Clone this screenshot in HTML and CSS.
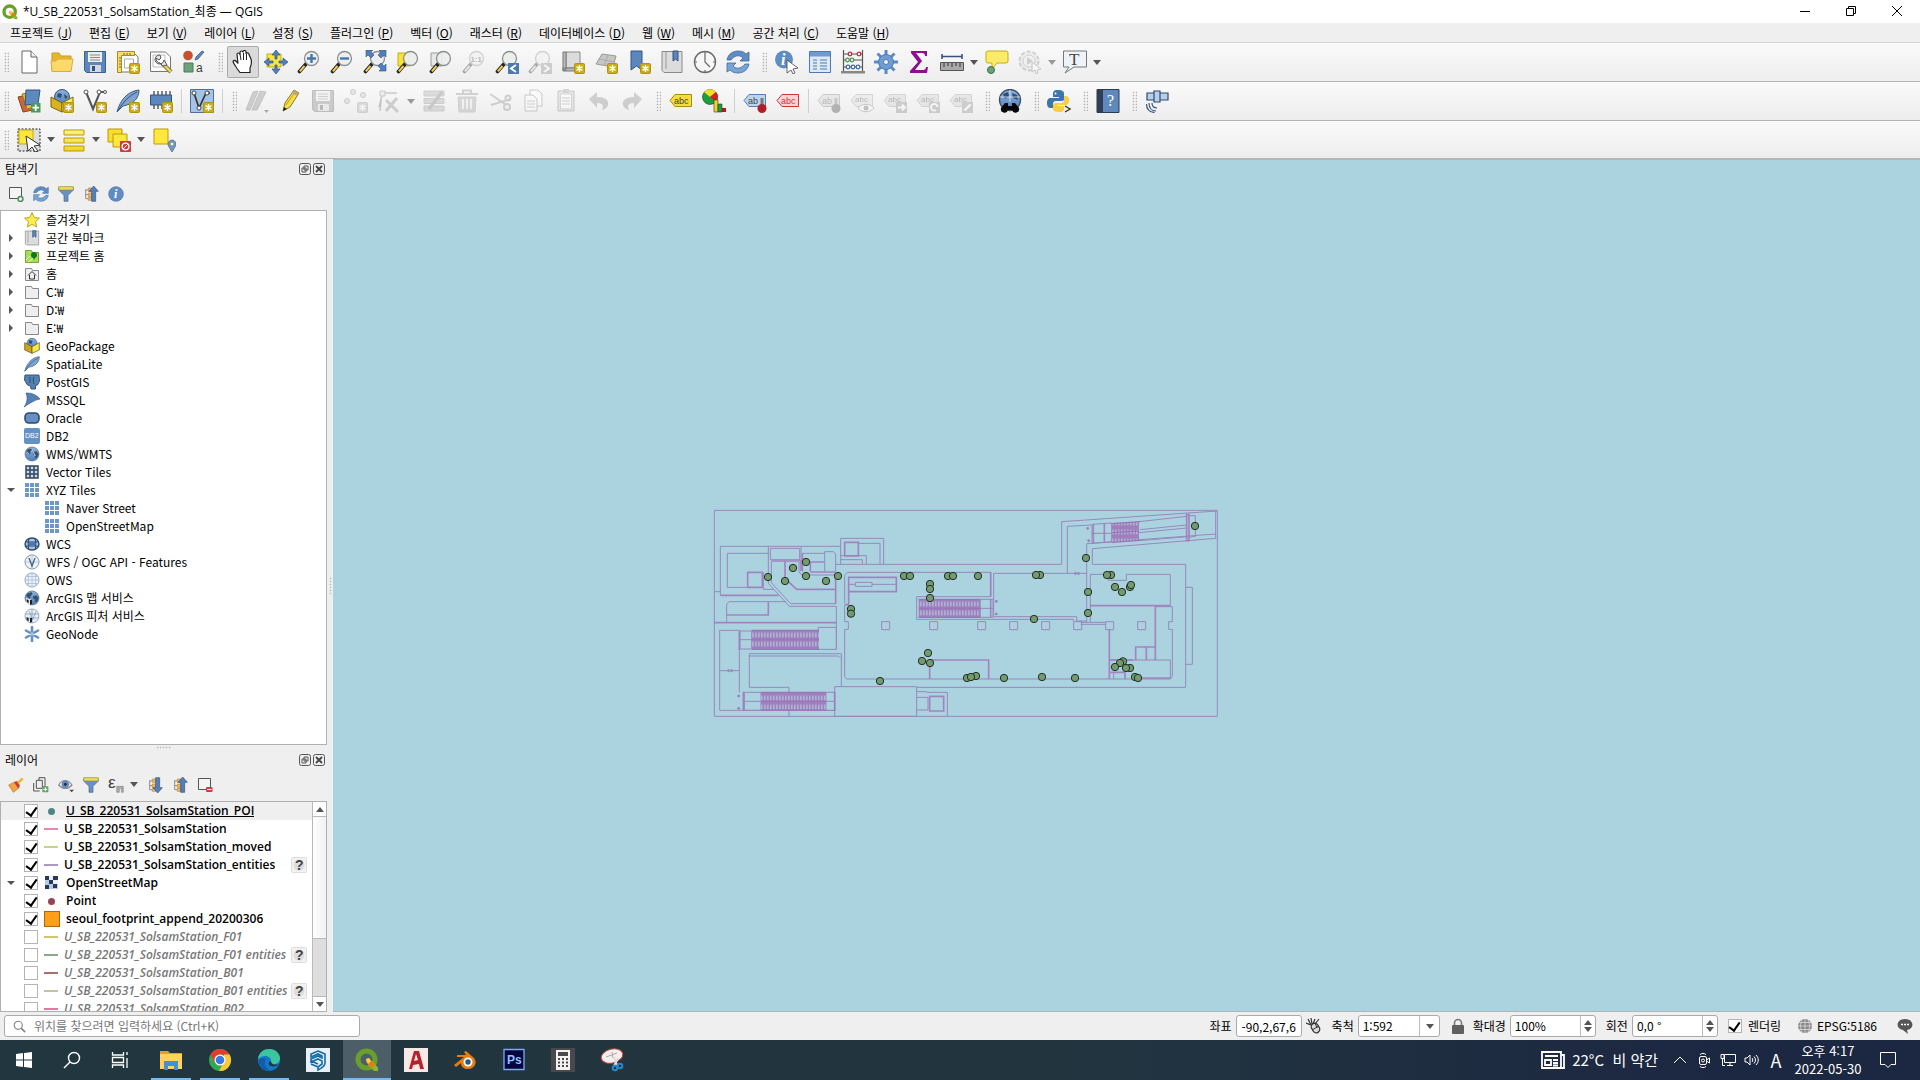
FILE: index.html
```html
<!DOCTYPE html>
<html lang="ko">
<head>
    <meta charset="UTF-8">
    <meta name="viewport" content="width=device-width, initial-scale=1.0">
    <title>*U_SB_220531_SolsamStation_최종 — QGIS</title>
    <link rel="stylesheet" href="styles.css">
</head>
<body>
    <!-- shared paint -->
    <svg class="paint" aria-hidden="true">
        <defs>
            <linearGradient id="blue" x1="0" y1="0" x2="0" y2="1"><stop offset="0" stop-color="#8fb2dc"/><stop offset="1" stop-color="#4f7fb8"/></linearGradient>
            <linearGradient id="yellow" x1="0" y1="0" x2="0" y2="1"><stop offset="0" stop-color="#fff27a"/><stop offset="1" stop-color="#f2d51c"/></linearGradient>
        </defs>
    </svg>
    <!-- icon sprite -->
    <svg class="sprite" aria-hidden="true">
        <defs>
            <g id="badge"><rect x="13.5" y="13.5" width="10" height="10" rx="1" fill="#c9ab1b" stroke="#b3950c"/><path d="M18.500 15v7M15.500 16.700l6 3.600M21.500 16.700l-6 3.600" stroke="#fff" stroke-width="1.400"/></g>
            <g id="mag"><path d="M9 14L2.500 21.500" stroke="#222" stroke-width="3.600" stroke-linecap="round"/><path d="M7.500 16L2.800 21.300" stroke="#f4cf4a" stroke-width="2"/><circle cx="14.500" cy="8.500" r="7" fill="#eceeee" fill-opacity=".9" stroke="#8a8f8f" stroke-width="1.300"/></g>
            <g id="globe"><circle cx="12" cy="12" r="10.500" fill="url(#blue)" stroke="#4b6486"/><path d="M6 5l5-2 2 3-3 3-1 4-4-2-2-3zM14 9l5-1 3 4-2 5-3 2-1-5-3-2z" fill="#35536f"/></g>
            <g id="tag"><path d="M1 11.500L6 5.500h16.500v12H6z"/></g>
            <g id="tree-rows"><path d="M4 5v14M4 6h4M4 13h4M4 19h4" stroke="#777" stroke-width="1.200"/><path d="M8 3h5v5H8zM8 10.500h5v5H8zM8 17h5v4.500H8z" fill="#f3b45a" stroke="#c98527"/></g>
        </defs>
        <symbol id="new" viewBox="0 0 24 24"><path d="M5 1h9l6 6v16H5z" fill="#fff" stroke="#666"/><path d="M14 1v6h6" fill="#eee" stroke="#666"/></symbol>
        <symbol id="open" viewBox="0 0 24 24"><path d="M2 21V3h7l2 3h10v5" fill="#e8b52e" stroke="#c99a2b"/><path d="M1 11h5l2-2h15l-2 12.500H2z" fill="#fbd96a" stroke="#d9ad3d"/></symbol>
        <symbol id="save" viewBox="0 0 24 24"><path d="M1.500 1.500h21v21h-19l-2-2z" fill="#5d86bd" stroke="#3a5f92"/><path d="M5 2h14v10H5z" fill="#eee"/><path d="M7 5h10M7 7.500h10M7 10h10" stroke="#8a8a8a"/><path d="M7 15h11v7H7z" fill="#d5d8de"/><path d="M9 16h3v5H9z" fill="#34547e"/></symbol>
        <symbol id="layout-new" viewBox="0 0 24 24"><path d="M5 3h13l4 4v15H5z" fill="#fff" stroke="#777"/><path d="M1.500 1.500h17v4h-13v17h-4z" fill="#f9dc6a" stroke="#a98a1e"/><path d="M3 8h2M3 11h2M3 14h2M3 17h2M8 3v2M11 3v2M14 3v2" stroke="#7d6614"/><path d="M8.500 9h9v9h-9z" fill="#fff" stroke="#aaa"/><use href="#badge"/></symbol>
        <symbol id="layouts" viewBox="0 0 24 24"><path d="M1.500 2h15l5 5v14.500h-20z" fill="#fff" stroke="#777"/><path d="M4 5h12v12H4z" fill="none" stroke="#bbb"/><path d="M13 13l9 9" stroke="#8b7a2b" stroke-width="4.400"/><path d="M13 13l9 9" stroke="#ead66a" stroke-width="2.400"/><path d="M11 5a4.500 4.500 0 1 0 4 5l3 5-4 1-3-3a4.500 4.500 0 0 1-4-5l3 2 2-2z" fill="#e3e3e3" stroke="#555"/></symbol>
        <symbol id="style" viewBox="0 0 24 24"><circle cx="6" cy="5.500" r="4.800" fill="#c5522e"/><path d="M2 13h9v9H2z" fill="#6aa377" stroke="#4b7d58"/><path d="M20 1l2 1-6 7-3 1 1-3z" fill="#5d86bd" stroke="#34547e" stroke-width=".7"/><text x="14" y="22" class="glyph sans" font-size="12">a</text></symbol>
        <symbol id="pan" viewBox="0 0 24 24"><path d="M9 22.500l-3-4c-1-2-3-4-4-7 1-2 3-1 5 2l-1-9c0-2 2.500-2 3 0V2.500c0-2 3-2 3 0V2c0-2 3-2 3 0v2c0-2 3-1 3 .500L20 9c1 4 0 7-1 9v4.500z" fill="#fff" stroke="#222" stroke-width="1.200"/><path d="M9 4l1 6M12.500 3v7M15.500 4v6" stroke="#222"/></symbol>
        <symbol id="pan-sel" viewBox="0 0 24 24"><path d="M3 4h14v13H3z" fill="#f5e642" stroke="#c6ab12"/><path d="M12 0l4 5h-3v4h-2V5H8zM12 24l4-5h-3v-4h-2v4H8zM0 12l5-4v3h4v2H5v3zM24 12l-5-4v3h-4v2h4v3z" fill="#5080bd" stroke="#34547e" stroke-width=".7"/></symbol>
        <symbol id="zoom-in" viewBox="0 0 24 24"><use href="#mag"/><path d="M14.500 4v9M10 8.500h9" stroke="#4674ae" stroke-width="2.400"/></symbol>
        <symbol id="zoom-out" viewBox="0 0 24 24"><use href="#mag"/><path d="M10 8.500h9" stroke="#4674ae" stroke-width="2.400"/></symbol>
        <symbol id="zoom-full" viewBox="0 0 24 24"><use href="#mag"/><path d="M3 0h7L8 2l3 3-3 3-3-3-2 2zM23 0h-7l2 2-3 3 3 3 3-3 2 2zM23 21h-7l2-2-3-3 3-3 3 3 2-2z" fill="#4f80bd" stroke="#34547e" stroke-width=".6"/></symbol>
        <symbol id="zoom-sel" viewBox="0 0 24 24"><path d="M2 3h11v13H2z" fill="#f9e433" stroke="#c6ab12"/><use href="#mag"/></symbol>
        <symbol id="zoom-layer" viewBox="0 0 24 24"><path d="M2 3h11v13H2z" fill="#e6e6e6" stroke="#999"/><use href="#mag"/></symbol>
        <symbol id="zoom-11" viewBox="0 0 24 24"><use href="#mag"/><text x="8.500" y="12" class="glyph sans bold" font-size="8">1:1</text></symbol>
        <symbol id="zoom-last" viewBox="0 0 24 24"><use href="#mag"/><path d="M13 13h11v11H13z" fill="#4b79b3"/><path d="M21 15l-5 3.500 5 3.500" fill="none" stroke="#fff" stroke-width="2"/></symbol>
        <symbol id="zoom-next" viewBox="0 0 24 24"><use href="#mag"/><path d="M13 13h11v11H13z" fill="#888"/><path d="M16 15l5 3.500-5 3.500" fill="none" stroke="#fff" stroke-width="2"/></symbol>
        <symbol id="view-new" viewBox="0 0 24 24"><path d="M5 2h14v16H5z" fill="#dcdcdc" stroke="#888"/><path d="M2 2h3v18H2zM2 18h17v3H2z" fill="#bbb" stroke="#777"/><use href="#badge"/></symbol>
        <symbol id="view-3d" viewBox="0 0 24 24"><path d="M8 4l14 2-3 11-17-3z" fill="#c6c6c6" stroke="#999"/><path d="M5 9l16 3M14 5l-4 11" stroke="#aaa"/><use href="#badge"/></symbol>
        <symbol id="mark-new" viewBox="0 0 24 24"><path d="M4 1h11v19l-5.500-4L4 20z" fill="#5b87be" stroke="#34547e"/><use href="#badge"/></symbol>
        <symbol id="marks" viewBox="0 0 24 24"><path d="M2 1.500h20v21H4l-2-2z" fill="#dcdcdc" stroke="#8a8a8a"/><path d="M6 2v17" stroke="#999"/><path d="M13 1h5v10l-2.500-2-2.500 2z" fill="#5b87be" stroke="#34547e"/></symbol>
        <symbol id="clock" viewBox="0 0 24 24"><circle cx="12" cy="12" r="10.500" fill="#f7f7f7" stroke="#6b6b6b" stroke-width="1.400"/><path d="M12 4v8l5 5M12 2v2M12 20v2M2 12h2M20 12h2" fill="none" stroke="#666" stroke-width="1.200"/></symbol>
        <symbol id="refresh" viewBox="0 0 24 24"><path d="M1 10C2 4 7 1 12 1c4 0 6 1 8 3l3-2v9h-9l3-3c-4-4-9-2-12 2z" fill="#5f8cc4" stroke="#40699d" stroke-width=".8"/><path d="M23 14c-1 6-6 9-11 9-4 0-6-1-8-3l-3 2v-9h9l-3 3c4 4 9 2 12-2z" fill="#7aa3d4" stroke="#40699d" stroke-width=".8"/></symbol>
        <symbol id="info" viewBox="0 0 24 24"><circle cx="12" cy="12" r="11" fill="#5f8cc4" stroke="#4a74ab"/><text x="9" y="18" class="glyph serif slant white" font-size="18">i</text></symbol>
        <symbol id="identify" viewBox="0 0 24 24"><circle cx="9" cy="9.500" r="9" fill="#5f8cc4"/><text x="6" y="15" class="glyph serif slant white" font-size="16">i</text><path d="M12 10l11 8-5 1 2 4-2 1-2-4-4 3z" fill="#fff" stroke="#444" stroke-width=".8"/></symbol>
        <symbol id="table" viewBox="0 0 24 24"><path d="M1.500 1.500h21v21h-21z" fill="#dceaf8" stroke="#4d79b0"/><path d="M2 2h20v4.500H2z" fill="#6f9bd0"/><path d="M5 10h4M5 13h4M5 16h4M5 19h4M12 10h7M12 13h7M12 16h7M12 19h7" stroke="#4d79b0" stroke-width="1.200"/></symbol>
        <symbol id="abacus" viewBox="0 0 24 24"><path d="M2.500 0v21M21.500 0v21M2 4h20M2 10h20M2 17h20" stroke="#555" stroke-width="1.200"/><path d="M0 21h24v2.500H0z" fill="#888"/><g fill="#fff" stroke-width="1.300"><g stroke="#d1273d"><circle cx="9" cy="4" r="1.800"/><circle cx="18" cy="4" r="1.800"/></g><g stroke="#4e9a56"><circle cx="6.500" cy="10" r="1.800"/><circle cx="11" cy="10" r="1.800"/></g><g stroke="#3d70a8"><circle cx="7" cy="17" r="1.800"/><circle cx="12" cy="17" r="1.800"/><circle cx="17" cy="17" r="1.800"/></g></g></symbol>
        <symbol id="gear" viewBox="0 0 24 24"><path d="M12 0v24M0 12h24M3.500 3.500l17 17M20.500 3.500l-17 17" stroke="#5b8ac6" stroke-width="3"/><circle cx="12" cy="12" r="7.500" fill="#6f9cd3" stroke="#4d7ab3"/><circle cx="12" cy="12" r="2.500" fill="#f4f4f4" stroke="#4d7ab3"/></symbol>
        <symbol id="sigma" viewBox="0 0 24 24"><path d="M4 1h16v5h-2c0-2-1-3-3-3H9l6 8-7 9h8c2 0 3-1 3-3h2l-1 6H3v-2l8-9-7-9z" fill="#8d0f8f"/></symbol>
        <symbol id="measure" viewBox="0 0 24 24"><path d="M2 6.500h20M2 4v5M22 4v5" stroke="#3c4f80" stroke-width="1.600"/><path d="M.500 12.500h23v8H.500z" fill="#aaa" stroke="#555"/><path d="M4 13v4M8 13v3M12 13v4M16 13v3M20 13v4" stroke="#333"/></symbol>
        <symbol id="tips" viewBox="0 0 24 24"><path d="M3 1h18a2 2 0 0 1 2 2v8a2 2 0 0 1-2 2H12l-5 6v-6H3a2 2 0 0 1-2-2V3a2 2 0 0 1 2-2z" fill="#fbeb6a" stroke="#c6ab12"/><circle cx="6" cy="20" r="3.500" fill="#6aa377" stroke="#3c6e49"/></symbol>
        <symbol id="action" viewBox="0 0 24 24"><circle cx="11" cy="11" r="9.500" fill="#ddd" stroke="#888" stroke-width="2" stroke-dasharray="4 2"/><circle cx="11" cy="11" r="6" fill="#eee" stroke="#888"/><path d="M9 7l6 4-6 4z" fill="#888"/><path d="M14 12l9 7-4 1 1 3-2 1-1-4-3 2z" fill="#fff" stroke="#777"/></symbol>
        <symbol id="text-note" viewBox="0 0 24 24"><path d="M.500 1h23v16H11l-9 6 4-6H.500z" fill="#eef3f8" stroke="#777"/><text x="6" y="14.500" class="glyph serif" font-size="17">T</text></symbol>

        <symbol id="sources" viewBox="0 0 24 24"><path d="M1 8l9-2 6 15-10 2z" fill="#c8683a" stroke="#8f3f1b"/><path d="M5 5l10-2 3 15-8 2z" fill="#e6b83c" stroke="#a17a19"/><path d="M9 1h14l-2 14-13 1z" fill="#5d89c1" stroke="#34547e"/><path d="M14 14h9.500v9.500H14z" fill="#4b9a5b"/><path d="M18.700 15.500v6.500M15.500 18.700H22" stroke="#fff" stroke-width="1.800"/></symbol>
        <symbol id="gpkg-new" viewBox="0 0 24 24"><circle cx="12" cy="8" r="7.500" fill="url(#blue)" stroke="#34547e"/><path d="M8 4l4 1-1 4-4-1zM14 5l4 3-3 2z" fill="#2e4f74"/><path d="M1 8l11 6v9L1 18z" fill="#d8b31c" stroke="#7c6409"/><path d="M23 8l-11 6v9l11-5z" fill="#f8ec5d" stroke="#7c6409"/><use href="#badge"/></symbol>
        <symbol id="gpkg" viewBox="0 0 24 24"><circle cx="12" cy="8" r="7.500" fill="url(#blue)" stroke="#34547e"/><path d="M8 3l5 1-2 5-4-1z" fill="#2e4f74"/><path d="M1 7l11 6v10L1 18z" fill="#cba718" stroke="#5f4d08"/><path d="M23 7l-11 6v10l11-5z" fill="#f6e74c" stroke="#5f4d08"/></symbol>
        <symbol id="vector-new" viewBox="0 0 24 24"><path d="M3 3l7 17L17 3h4" fill="none" stroke="#555" stroke-width="2"/><g fill="#fff" stroke="#555"><circle cx="3" cy="3" r="2"/><circle cx="16" cy="3" r="2"/><circle cx="22" cy="3" r="1.500"/></g><use href="#badge"/></symbol>
        <symbol id="feather" viewBox="0 0 24 24"><path d="M1 23C4 11 12 2 23 1c0 8-5 14-16 16z" fill="#7fa3cf" stroke="#3d5f8c"/><path d="M2 22C7 13 13 7 21 3" stroke="#34547e" fill="none"/></symbol>
        <symbol id="feather-new" viewBox="0 0 24 24"><use href="#feather"/><use href="#badge"/></symbol>
        <symbol id="chip" viewBox="0 0 24 24"><path d="M5 2v18M9 2v18M13 2v18M17 2v18M21 2v18" stroke="#555" stroke-width="1.400"/><path d="M1.500 6h21v10h-21z" fill="#5b87be" stroke="#34547e"/><use href="#badge"/></symbol>
        <symbol id="virtual" viewBox="0 0 24 24"><path d="M.500.500h23v23H.500z" fill="#a4c3e6" stroke="#4d6f9b"/><path d="M4 4l5 15 7-15h4" fill="none" stroke="#333" stroke-width="1.700"/><g fill="#fff" stroke="#444"><circle cx="4" cy="4" r="2"/><circle cx="9" cy="19" r="2"/><circle cx="17" cy="4" r="2"/></g><use href="#badge"/></symbol>
        <symbol id="edits" viewBox="0 0 24 24"><path d="M1 21L8 3l5-1-8 19zM7 21l8-19 6 1-9 18z" fill="#888" stroke="#666"/><path d="M19 21h5l-2.500 3z" fill="#222"/></symbol>
        <symbol id="pencil" viewBox="0 0 24 24"><path d="M5 22l2-8L16 1l5 3-9 14z" fill="#f5e04a" stroke="#8b7a14"/><path d="M8 16l9-13" stroke="#b8a11e"/><path d="M5 22l1-4 3 2z" fill="#222"/><path d="M16 1l5 3-2 3-5-3z" fill="#b9a876"/></symbol>
        <symbol id="points" viewBox="0 0 24 24"><g fill="#ccc" stroke="#777"><circle cx="9" cy="3" r="2.500"/><circle cx="19" cy="6" r="2.500"/><circle cx="3" cy="12" r="2.500"/></g><use href="#badge"/></symbol>
        <symbol id="vertex" viewBox="0 0 24 24"><path d="M3 22L5 4h15M5 6l-3 12" fill="none" stroke="#777" stroke-width="1.500"/><path d="M3 2h5v5H3z" fill="#ddd" stroke="#777"/><path d="M9 22L20 9M9 11l12 12" stroke="#888" stroke-width="3"/></symbol>
        <symbol id="modify" viewBox="0 0 24 24"><path d="M2 2h20v5H2zM2 9.500h20v5H2zM2 17h20v5H2z" fill="#aaa" stroke="#888"/><path d="M7 20L20 3" stroke="#777" stroke-width="3"/></symbol>
        <symbol id="trash" viewBox="0 0 24 24"><path d="M3 8h18l-1 15H4z" fill="#b5a0a0" stroke="#988"/><path d="M1 5h22M8 4V1.500h8V4" fill="none" stroke="#988" stroke-width="2"/><path d="M8 10v10M12 10v10M16 10v10" stroke="#eee" stroke-width="2"/></symbol>
        <symbol id="cut" viewBox="0 0 24 24"><path d="M2 5l15 10M3 16l20-6" stroke="#888" stroke-width="2"/><g fill="none" stroke="#888" stroke-width="2"><circle cx="19" cy="18" r="3"/><circle cx="20" cy="9" r="2.500"/></g></symbol>
        <symbol id="copy" viewBox="0 0 24 24"><path d="M9 1h8l4 4v12H9z" fill="#fff" stroke="#777"/><path d="M4 6h8l4 4v12H4z" fill="#fff" stroke="#777"/><path d="M6 12h8M6 15h8M6 18h8" stroke="#888"/></symbol>
        <symbol id="paste" viewBox="0 0 24 24"><path d="M4 2h16v20H4z" fill="#ccc" stroke="#777"/><path d="M6.500 5h11v15h-11z" fill="#fff" stroke="#999"/><path d="M9 0h6v4H9z" fill="#999"/><path d="M8 9h8M8 12h8M8 15h8" stroke="#888"/></symbol>
        <symbol id="undo" viewBox="0 0 24 24"><path d="M2 10l8-7v5c8 0 12 3 11 8-1 3-3 4-6 5 2-4 1-7-5-7v5z" fill="#888"/></symbol>
        <symbol id="redo" viewBox="0 0 24 24"><path d="M22 10l-8-7v5C6 8 2 11 3 16c1 3 3 4 6 5-2-4-1-7 5-7v5z" fill="#888"/></symbol>
        <symbol id="label" viewBox="0 0 24 24"><use href="#tag" fill="#f5dc3f" stroke="#a98c0b"/><text x="5" y="15" class="glyph sans" font-size="9">abc</text></symbol>
        <symbol id="diagram" viewBox="0 0 24 24"><circle cx="8" cy="8" r="7.500" fill="#17a03b" stroke="#333" stroke-width=".6"/><path d="M8 8L2 3a8 8 0 0 1 12 0z" fill="#f4dd22"/><path d="M8 8l6-5a8 8 0 0 1 0 10z" fill="#d0221f"/><path d="M12 11h4v12h-4z" fill="#f1d51e" stroke="#333" stroke-width=".6"/><path d="M16 15h4v8h-4z" fill="#17a03b" stroke="#333" stroke-width=".6"/><path d="M20 19h4v4h-4z" fill="#b5171d"/></symbol>
        <symbol id="label-pin" viewBox="0 0 24 24"><use href="#tag" fill="#bcd4ef" stroke="#5680b2"/><text x="5" y="15" class="glyph sans" font-size="9">ab</text><path d="M19 9v8" stroke="#777" stroke-width="3"/><circle cx="19" cy="19.500" r="4.500" fill="#b01f28"/></symbol>
        <symbol id="label-red" viewBox="0 0 24 24"><use href="#tag" fill="#fbd5d5" stroke="#d9303a"/><text x="5" y="15" class="glyph sans red" font-size="9">abc</text></symbol>
        <symbol id="label-eye" viewBox="0 0 24 24"><use href="#tag" fill="#ddd" stroke="#999"/><text x="5" y="13" class="glyph sans" font-size="8">abc</text><path d="M8 19c4-5 12-5 16 0-4 5-12 5-16 0z" fill="#fff" stroke="#777"/><circle cx="16" cy="19" r="2.500" fill="#666"/></symbol>
        <symbol id="label-move" viewBox="0 0 24 24"><use href="#tag" fill="#ccc" stroke="#999"/><text x="5" y="13" class="glyph sans" font-size="8">abc</text><path d="M13 13h11v11H13z" fill="#888"/><path d="M15 18.500h7M19 15.500l3 3-3 3" fill="none" stroke="#fff" stroke-width="1.800"/></symbol>
        <symbol id="label-rotate" viewBox="0 0 24 24"><use href="#tag" fill="#ccc" stroke="#999"/><text x="5" y="13" class="glyph sans" font-size="8">abc</text><path d="M13 13h11v11H13z" fill="#888"/><path d="M20 21a3.300 3.300 0 1 1 1.500-3" fill="none" stroke="#fff" stroke-width="1.800"/></symbol>
        <symbol id="label-edit" viewBox="0 0 24 24"><use href="#tag" fill="#ccc" stroke="#999"/><text x="5" y="13" class="glyph sans" font-size="8">abc</text><path d="M13 13h11v11H13z" fill="#888"/><path d="M15.500 21.500l6-6" stroke="#fff" stroke-width="2.400"/></symbol>
        <symbol id="search-web" viewBox="0 0 24 24"><circle cx="12" cy="11" r="10.500" fill="url(#blue)" stroke="#3a4f6b" stroke-width="1.300"/><path d="M5 5l5-2 1 4-4 3zM14 4l5 2 1 5-5-2z" fill="#2e4f74"/><path d="M12 1v12M2 8h20" stroke="#dfe9f5" stroke-width=".8"/><path d="M7 14h3v3h4v-3h3l4 5a3 3 0 1 1-7 2h-4a3 3 0 1 1-7-2z" fill="#050505"/></symbol>
        <symbol id="python" viewBox="0 0 24 24"><path d="M11 1c-5 0-5 2-5 5v2h6v1H4c-3 0-4 2-4 5s1 5 4 5h2v-4c0-2 1-3 3-3h6c2 0 2-1 2-3V5c0-3-2-4-6-4z" fill="#3d76a8"/><path d="M12 23c5 0 5-2 5-4v-2h-6v-1h7c3 0 4-2 4-5s-1-4-4-4h-1v4c0 2-1 3-3 3H9c-2 0-3 1-3 3v2c0 3 2 4 6 4z" fill="#f8cf3f"/><circle cx="8.500" cy="4.500" r="1" fill="#fff"/><path d="M18 17l5 3-5 3" fill="none" stroke="#333" stroke-width="1.300"/></symbol>
        <symbol id="help" viewBox="0 0 24 24"><path d="M1 .500h22v23H1z" fill="#5f88bd" stroke="#283c57"/><path d="M1 .500h6v23H1z" fill="#2f3e52"/><text x="11" y="17" class="glyph serif white" font-size="16">?</text></symbol>
        <symbol id="gps" viewBox="0 0 24 24"><path d="M2 4h7v7H2zM15 4h8v7h-8zM9 2h6v11H9z" fill="#b7cfe9" stroke="#2c4a72" stroke-width="1.200"/><path d="M7 14c0 3 2 5 5 5M4 14c0 5 3 8 7 8M1.500 15c0 5 3 8 8 8.500" fill="none" stroke="#34547e" stroke-width="1.200"/></symbol>

        <symbol id="select" viewBox="0 0 24 24"><path d="M1 1h22v22H1z" fill="#ddd" stroke="#222" stroke-dasharray="2 1.500"/><path d="M2 2h14v14H2z" fill="#fde83b" stroke="#c6ab12"/><path d="M9 8l14 9-6 1 4 5-3 1-3-5-4 4z" fill="#fff" stroke="#333"/></symbol>
        <symbol id="select-form" viewBox="0 0 24 24"><path d="M2 2h20v5H2zM2 10h20v5H2zM2 18h20v5H2z" fill="url(#yellow)" stroke="#b99a0a"/></symbol>
        <symbol id="deselect" viewBox="0 0 24 24"><path d="M1 1h14v13H1z" fill="#f8df2e" stroke="#b99a0a"/><path d="M6 6h14v13H6z" fill="#fde83b" stroke="#b99a0a"/><rect x="13" y="13" width="11" height="11" rx="1" fill="#cf3a3c"/><circle cx="18.500" cy="18.500" r="3.400" fill="none" stroke="#fff" stroke-width="1.300"/><path d="M16 21l5-5" stroke="#fff"/></symbol>
        <symbol id="select-loc" viewBox="0 0 24 24"><path d="M2 1h14v15H2z" fill="#fde83b" stroke="#b99a0a"/><path d="M20 24l-3.500-6a4 4 0 1 1 7 0z" fill="#7898b5" stroke="#52718d" stroke-width=".8"/><circle cx="20" cy="16" r="1.300" fill="#fff"/></symbol>

        <symbol id="add-box" viewBox="0 0 16 16"><path d="M1.500 1.500h12v11h-12z" fill="#f4f4f4" stroke="#555"/><circle cx="12.500" cy="13" r="2.500" fill="#e8f3e8" stroke="#4e8a56" stroke-width="1.400"/></symbol>
        <symbol id="del-box" viewBox="0 0 16 16"><path d="M1.500 1.500h12v11h-12z" fill="#f4f4f4" stroke="#555"/><rect x="9" y="10" width="6.500" height="5" rx="1" fill="#d33c47"/><path d="M10 12.500h4.500" stroke="#fff"/></symbol>
        <symbol id="funnel" viewBox="0 0 24 24"><path d="M1 3h22v3l-8 8v9H9v-9L1 6z" fill="#6991c4" stroke="#42679a"/><path d="M1 1h22v5H1z" fill="#e8dc64" stroke="#978b2a"/></symbol>
        <symbol id="collapse" viewBox="0 0 24 24"><use href="#tree-rows"/><path d="M16 0l7 8h-4v15h-6V8H9z" fill="#5280b8" stroke="#34547e"/></symbol>
        <symbol id="expand" viewBox="0 0 24 24"><use href="#tree-rows"/><path d="M16 24l7-8h-4V1h-6v15H9z" fill="#5280b8" stroke="#34547e"/></symbol>
        <symbol id="brush" viewBox="0 0 24 24"><path d="M1 12l10-5 6 9-9 7z" fill="#efa24a" stroke="#c37a2b"/><path d="M9 8l5-2 4 7-3 4z" fill="#c83e2f"/><path d="M15 9l7-7" stroke="#e9bb3b" stroke-width="4"/></symbol>
        <symbol id="group" viewBox="0 0 24 24"><path d="M1 9v12h9M5 5v12h9V5zM9 5V1h9v14h-4" fill="none" stroke="#555" stroke-width="1.500"/><rect x="14" y="14" width="9" height="9" rx="1" fill="#5ea269"/><path d="M18.500 15.500v6M15.500 18.500h6" stroke="#fff" stroke-width="1.500"/></symbol>
        <symbol id="eye" viewBox="0 0 24 24"><path d="M1 12C6 3 15 3 21 12c-6 7-14 7-20 0z" fill="#eee" stroke="#8a8a8a" stroke-width="1.800"/><circle cx="11" cy="11" r="5.500" fill="#5b87be"/><circle cx="11" cy="11" r="2" fill="#223"/><path d="M17 19h7l-3.500 4z" fill="#444"/></symbol>
        <symbol id="epsilon" viewBox="0 0 24 24"><text x="0" y="16" class="glyph sans" font-size="26">ε</text><path d="M13 23v-9h10v9h-3v-6h-3v6z" fill="#aaa" stroke="#777" stroke-width=".7"/></symbol>

        <symbol id="star" viewBox="0 0 16 16"><path d="M8 .500l2.200 5 5.300.600-4 3.600 1.200 5.300L8 12.300 3.300 15l1.200-5.300-4-3.600 5.300-.600z" fill="#fbee4e" stroke="#c2a51d"/></symbol>
        <symbol id="folder" viewBox="0 0 16 16"><path d="M1.500 14.500v-12h6l1 2h6v10z" fill="#eee" stroke="#888"/></symbol>
        <symbol id="folder-home" viewBox="0 0 16 16"><path d="M1.500 14.500v-12h6l1 2h6v10z" fill="#eee" stroke="#888"/><path d="M4 9.500l4-4 4 4M5.500 9v4h5V9" fill="none" stroke="#333"/></symbol>
        <symbol id="folder-project" viewBox="0 0 16 16"><path d="M1.500 14.500v-12h6l1 2h6v10z" fill="#a8dc55" stroke="#77a23a"/><path d="M2 12l4-4M4 14l6-4" stroke="#e9f6c9"/><circle cx="10" cy="7" r="3" fill="#0d7a1f"/><path d="M8 8l2 4 2-4z" fill="#0d7a1f"/></symbol>
        <symbol id="postgis" viewBox="0 0 16 16"><path d="M1 1h14l.500 6-2 4-2 .500V15H7l-.500-3-3-1L.500 6z" fill="#5580b4" stroke="#34547e"/><path d="M6 3v6M10 3c-1 3-1 5 0 7" fill="none" stroke="#2c4b74"/></symbol>
        <symbol id="mssql" viewBox="0 0 16 16"><path d="M2 1c5 0 10 1 14 6l-4 1c-4 2-8 4-12 7 3-4 4-9 2-14z" fill="#5580b4" stroke="#34547e" stroke-width=".6"/></symbol>
        <symbol id="oracle" viewBox="0 0 16 16"><rect x="1" y="3" width="14" height="10" rx="4" fill="#668fc5" stroke="#2f4a6d" stroke-width="1.600"/></symbol>
        <symbol id="db2" viewBox="0 0 16 16"><rect width="16" height="16" rx="2" fill="#6491c6"/><text x="1" y="10" class="glyph sans white" font-size="7">DB2</text></symbol>
        <symbol id="vtiles" viewBox="0 0 16 16"><path d="M2 2h12v12H2zM6 2v12M10 2v12M2 6h12M2 10h12" fill="#c8d9ec" stroke="#32445e" stroke-width="1.500"/></symbol>
        <symbol id="tiles" viewBox="0 0 16 16"><path d="M1 1h4v4H1zM6 1h4v4H6zM11 1h4v4h-4zM1 6h4v4H1zM6 6h4v4H6zM11 6h4v4h-4zM1 11h4v4H1zM6 11h4v4H6zM11 11h4v4h-4z" fill="#6c97ca"/></symbol>
        <symbol id="wms" viewBox="0 0 24 24"><use href="#globe"/><path d="M10 3l3 3-3 3M4 9l4 3M14 9l3 6" fill="none" stroke="#dfe9f5" stroke-width="1.200"/></symbol>
        <symbol id="wcs" viewBox="0 0 16 16"><ellipse cx="8" cy="8" rx="7" ry="6" fill="#a9c3e2" stroke="#2f4a6d" stroke-width="1.400"/><path d="M1 6h14M1 10h14M5 2c-1 4-1 8 0 12M11 2c1 4 1 8 0 12" fill="none" stroke="#2f4a6d"/><path d="M5 6h6v4H5z" fill="#4c79b3"/></symbol>
        <symbol id="wfs" viewBox="0 0 16 16"><circle cx="8" cy="8" r="7" fill="#edf3fa" stroke="#7c93ad"/><path d="M1 8h14M8 1v14" stroke="#b9cadd"/><path d="M5 4l3 8 3-8" fill="none" stroke="#4d6580" stroke-width="1.400"/></symbol>
        <symbol id="ows" viewBox="0 0 16 16"><circle cx="8" cy="8" r="7" fill="#edf3fa" stroke="#8fa7c4"/><path d="M1 8h14M8 1v14M2 4.500h12M2 11.500h12M5 2c-1 4-1 8 0 12M11 2c1 4 1 8 0 12" fill="none" stroke="#a6bdd8" stroke-width=".8"/></symbol>
        <symbol id="arc-map" viewBox="0 0 24 24"><use href="#globe"/><path d="M3 12l7 2-1 9-6-3z" fill="#fff" fill-opacity=".8"/><path d="M4 14l3 1v5l-3-2zM9 15h3v6l-3 1z" fill="#222"/></symbol>
        <symbol id="arc-feat" viewBox="0 0 24 24"><circle cx="12" cy="12" r="10.500" fill="#e6eef7" stroke="#6e87a3"/><path d="M2 9h20M2 15h20M12 2v20M8 5l5 13 5-13" fill="none" stroke="#7890aa"/><path d="M4 14l3 1v5l-3-2zM9 15h3v6l-3 1z" fill="#222"/></symbol>
        <symbol id="geonode" viewBox="0 0 16 16"><path d="M8 1v14M2 4.500l12 7M14 4.500l-12 7" stroke="#668fc5" stroke-width="2.600" stroke-linecap="round"/><circle cx="8" cy="8" r="2" fill="#fff" fill-opacity=".4"/></symbol>
        <symbol id="raster" viewBox="0 0 16 16"><path d="M1 1h13v13H1z" fill="#b9cae2"/><path d="M1 1h4v4H1zM9 1h5v4H9zM5 5h4v4H5zM1 10h4v4H1zM9 9h4v4H9z" fill="#26395a"/><path d="M5 1h4v4H5zM9 5h5v4H9z" fill="#e9eff7"/></symbol>
        <symbol id="unknown" viewBox="0 0 16 16"><rect x=".500" y=".500" width="15" height="15" rx="1" fill="#f1f1f1" stroke="#ddd"/><circle cx="8" cy="8" r="5.500" fill="#ddd"/><text x="4" y="13" class="glyph sans bold" font-size="14">?</text></symbol>
        <symbol id="float" viewBox="0 0 12 12"><rect x=".500" y=".500" width="11" height="11" rx="2" fill="#eee" stroke="#555"/><path d="M5 3h4v4H5zM3 5h4v4H3z" fill="none" stroke="#555"/></symbol>
        <symbol id="close" viewBox="0 0 12 12"><rect x=".500" y=".500" width="11" height="11" rx="2" fill="#eee" stroke="#555"/><path d="M3 3l6 6M9 3l-6 6" stroke="#444" stroke-width="1.800"/></symbol>
        <symbol id="glass" viewBox="0 0 16 16"><circle cx="6.500" cy="6.500" r="5" fill="none" stroke="#888" stroke-width="1.400"/><path d="M10 10l5 5" stroke="#888" stroke-width="2"/></symbol>
        <symbol id="mouse" viewBox="0 0 16 16"><path d="M2 1l3 6M0 5l5 2M5 0l1 6M9 1L7 6M13 1L9 6" stroke="#333" stroke-width="1.200"/><rect x="6" y="5" width="7" height="10" rx="3.500" transform="rotate(-30 9.500 10)" fill="#ddd" stroke="#333" stroke-width="1.300"/><path d="M6 12l7-4M9 5l2 5" stroke="#333"/></symbol>
        <symbol id="lock" viewBox="0 0 16 16"><path d="M4.500 8V5a3.500 3.500 0 0 1 7 0v3" fill="none" stroke="#777" stroke-width="1.600"/><rect x="2" y="7" width="12" height="9" rx="1" fill="#5f5f5f"/></symbol>
        <symbol id="crs" viewBox="0 0 16 16"><circle cx="8" cy="8" r="7" fill="#888"/><path d="M1 8h14M8 1v14M2 4.500h12M2 11.500h12M5 2c-2 4-2 8 0 12M11 2c2 4 2 8 0 12" fill="none" stroke="#ddd" stroke-width=".8"/></symbol>
        <symbol id="message" viewBox="0 0 16 16"><path d="M8 1c9 0 10 10 2 11l1 4-5-4C-2 11-1 1 8 1z" fill="#555"/><path d="M4 6.500h2M7 6.500h2M10 6.500h2" stroke="#fff" stroke-width="1.500"/></symbol>
        <symbol id="qgis" viewBox="0 0 24 24"><circle cx="11.500" cy="11.500" r="8.500" fill="none" stroke="#69a02c" stroke-width="5"/><path d="M14 14l4-1 5 7v3h-4l-6-6z" fill="#86b832"/><path d="M11 11l3-1 6 7-3 3-6-6z" fill="#ee7913"/><path d="M11 11l3-1 2 3-3 3z" fill="#f0d34f"/></symbol>
    </svg>

    <header class="titlebar">
        <svg class="ic16"><use href="#qgis"/></svg>
        <h1>*U_SB_220531_SolsamStation_최종 — QGIS</h1>
        <div class="window-buttons">
            <button aria-label="최소화"><svg viewBox="0 0 12 12"><path d="M1 6.500h10"/></svg></button>
            <button aria-label="이전 크기로"><svg viewBox="0 0 12 12"><path d="M1.500 3.500h7v7h-7zM3.500 3.500v-2h7v7h-2"/></svg></button>
            <button aria-label="닫기"><svg viewBox="0 0 12 12"><path d="M1 1l10 10M11 1L1 11"/></svg></button>
        </div>
    </header>

    <nav class="menubar">
        <button>프로젝트 (<u>J</u>)</button>
        <button>편집 (<u>E</u>)</button>
        <button>보기 (<u>V</u>)</button>
        <button>레이어 (<u>L</u>)</button>
        <button>설정 (<u>S</u>)</button>
        <button>플러그인 (<u>P</u>)</button>
        <button>벡터 (<u>O</u>)</button>
        <button>래스터 (<u>R</u>)</button>
        <button>데이터베이스 (<u>D</u>)</button>
        <button>웹 (<u>W</u>)</button>
        <button>메시 (<u>M</u>)</button>
        <button>공간 처리 (<u>C</u>)</button>
        <button>도움말 (<u>H</u>)</button>
    </nav>

    <!-- toolbars -->
    <div class="toolbar-row">
        <div class="toolbar">
            <button aria-label="새 프로젝트"><svg><use href="#new"/></svg></button>
            <button aria-label="열기"><svg><use href="#open"/></svg></button>
            <button aria-label="저장"><svg><use href="#save"/></svg></button>
            <button aria-label="새 인쇄 조판"><svg><use href="#layout-new"/></svg></button>
            <button aria-label="조판 관리자"><svg><use href="#layouts"/></svg></button>
            <button aria-label="스타일 관리자"><svg><use href="#style"/></svg></button>
        </div>
        <div class="toolbar">
            <button class="active" aria-label="지도 이동"><svg><use href="#pan"/></svg></button>
            <button aria-label="선택 영역으로 이동"><svg><use href="#pan-sel"/></svg></button>
            <button aria-label="확대"><svg><use href="#zoom-in"/></svg></button>
            <button aria-label="축소"><svg><use href="#zoom-out"/></svg></button>
            <button aria-label="전체 보기"><svg><use href="#zoom-full"/></svg></button>
            <button aria-label="선택 영역 보기"><svg><use href="#zoom-sel"/></svg></button>
            <button aria-label="레이어 보기"><svg><use href="#zoom-layer"/></svg></button>
            <button disabled aria-label="원본 해상도"><svg><use href="#zoom-11"/></svg></button>
            <button aria-label="이전 보기"><svg><use href="#zoom-last"/></svg></button>
            <button disabled aria-label="다음 보기"><svg><use href="#zoom-next"/></svg></button>
            <button aria-label="새 지도 뷰"><svg><use href="#view-new"/></svg></button>
            <button aria-label="새 3D 뷰"><svg><use href="#view-3d"/></svg></button>
            <button aria-label="새 북마크"><svg><use href="#mark-new"/></svg></button>
            <button aria-label="북마크"><svg><use href="#marks"/></svg></button>
            <button aria-label="시간 제어기"><svg><use href="#clock"/></svg></button>
            <button aria-label="새로고침"><svg><use href="#refresh"/></svg></button>
        </div>
        <div class="toolbar">
            <button aria-label="객체 식별"><svg><use href="#identify"/></svg></button>
            <button aria-label="속성 테이블"><svg><use href="#table"/></svg></button>
            <button aria-label="필드 계산기"><svg><use href="#abacus"/></svg></button>
            <button aria-label="공간 처리 툴박스"><svg><use href="#gear"/></svg></button>
            <button aria-label="통계"><svg><use href="#sigma"/></svg></button>
            <button class="drop" aria-label="측정"><svg><use href="#measure"/></svg></button>
            <button aria-label="맵 도움말"><svg><use href="#tips"/></svg></button>
            <button class="drop" disabled aria-label="액션"><svg><use href="#action"/></svg></button>
            <button class="drop" aria-label="텍스트 주석"><svg><use href="#text-note"/></svg></button>
        </div>
    </div>

    <div class="toolbar-row">
        <div class="toolbar">
            <button aria-label="데이터 원본 관리자"><svg><use href="#sources"/></svg></button>
            <button aria-label="새 GeoPackage"><svg><use href="#gpkg-new"/></svg></button>
            <button aria-label="새 Shapefile"><svg><use href="#vector-new"/></svg></button>
            <button aria-label="새 SpatiaLite"><svg><use href="#feather-new"/></svg></button>
            <button aria-label="새 임시 레이어"><svg><use href="#chip"/></svg></button>
            <span class="sep"></span>
            <button aria-label="새 가상 레이어"><svg><use href="#virtual"/></svg></button>
            <span class="sep"></span>
        </div>
        <div class="toolbar">
            <button disabled aria-label="현재 편집"><svg><use href="#edits"/></svg></button>
            <button aria-label="편집 전환"><svg><use href="#pencil"/></svg></button>
            <button disabled aria-label="편집 저장"><svg><use href="#save"/></svg></button>
            <button disabled aria-label="포인트 추가"><svg><use href="#points"/></svg></button>
            <button class="drop" disabled aria-label="꼭짓점 도구"><svg><use href="#vertex"/></svg></button>
            <button disabled aria-label="속성 수정"><svg><use href="#modify"/></svg></button>
            <button disabled aria-label="삭제"><svg><use href="#trash"/></svg></button>
            <button disabled aria-label="잘라내기"><svg><use href="#cut"/></svg></button>
            <button disabled aria-label="복사"><svg><use href="#copy"/></svg></button>
            <button disabled aria-label="붙여넣기"><svg><use href="#paste"/></svg></button>
            <button disabled aria-label="실행 취소"><svg><use href="#undo"/></svg></button>
            <button disabled aria-label="다시 실행"><svg><use href="#redo"/></svg></button>
        </div>
        <div class="toolbar">
            <button aria-label="라벨"><svg><use href="#label"/></svg></button>
            <button aria-label="다이어그램"><svg><use href="#diagram"/></svg></button>
            <span class="sep"></span>
            <button aria-label="고정 라벨 강조"><svg><use href="#label-pin"/></svg></button>
            <button aria-label="미배치 라벨"><svg><use href="#label-red"/></svg></button>
            <span class="sep"></span>
            <button disabled aria-label="라벨 고정"><svg><use href="#label-pin"/></svg></button>
            <button disabled aria-label="라벨 표시"><svg><use href="#label-eye"/></svg></button>
            <button disabled aria-label="라벨 이동"><svg><use href="#label-move"/></svg></button>
            <button disabled aria-label="라벨 회전"><svg><use href="#label-rotate"/></svg></button>
            <button disabled aria-label="라벨 변경"><svg><use href="#label-edit"/></svg></button>
        </div>
        <div class="toolbar"><button aria-label="메타 검색"><svg><use href="#search-web"/></svg></button></div>
        <div class="toolbar"><button aria-label="파이썬 콘솔"><svg><use href="#python"/></svg></button></div>
        <div class="toolbar"><button aria-label="도움말 목차"><svg><use href="#help"/></svg></button></div>
        <div class="toolbar"><button aria-label="GPS"><svg><use href="#gps"/></svg></button></div>
    </div>

    <div class="toolbar-row last">
        <div class="toolbar">
            <button class="drop" aria-label="객체 선택"><svg><use href="#select"/></svg></button>
            <button class="drop" aria-label="값으로 선택"><svg><use href="#select-form"/></svg></button>
            <button class="drop" aria-label="선택 해제"><svg><use href="#deselect"/></svg></button>
            <button aria-label="위치로 선택"><svg><use href="#select-loc"/></svg></button>
        </div>
    </div>

    <main class="workspace">
        <aside class="docks">
            <!-- browser -->
            <section class="dock browser">
                <div class="dock-title">
                    <h2>탐색기</h2>
                    <button aria-label="분리"><svg><use href="#float"/></svg></button>
                    <button aria-label="닫기"><svg><use href="#close"/></svg></button>
                </div>
                <div class="dock-tools">
                    <button aria-label="레이어 추가"><svg><use href="#add-box"/></svg></button>
                    <button aria-label="새로고침"><svg><use href="#refresh"/></svg></button>
                    <button aria-label="필터"><svg><use href="#funnel"/></svg></button>
                    <button aria-label="모두 접기"><svg><use href="#collapse"/></svg></button>
                    <button aria-label="속성"><svg><use href="#info"/></svg></button>
                </div>
                <ul class="tree">
                    <li><svg class="ic16"><use href="#star"/></svg>즐겨찾기</li>
                    <li class="closed"><svg class="ic16"><use href="#marks"/></svg>공간 북마크</li>
                    <li class="closed"><svg class="ic16"><use href="#folder-project"/></svg>프로젝트 홈</li>
                    <li class="closed"><svg class="ic16"><use href="#folder-home"/></svg>홈</li>
                    <li class="closed"><svg class="ic16"><use href="#folder"/></svg>C:₩</li>
                    <li class="closed"><svg class="ic16"><use href="#folder"/></svg>D:₩</li>
                    <li class="closed"><svg class="ic16"><use href="#folder"/></svg>E:₩</li>
                    <li><svg class="ic16"><use href="#gpkg"/></svg>GeoPackage</li>
                    <li><svg class="ic16"><use href="#feather"/></svg>SpatiaLite</li>
                    <li><svg class="ic16"><use href="#postgis"/></svg>PostGIS</li>
                    <li><svg class="ic16"><use href="#mssql"/></svg>MSSQL</li>
                    <li><svg class="ic16"><use href="#oracle"/></svg>Oracle</li>
                    <li><svg class="ic16"><use href="#db2"/></svg>DB2</li>
                    <li><svg class="ic16"><use href="#wms"/></svg>WMS/WMTS</li>
                    <li><svg class="ic16"><use href="#vtiles"/></svg>Vector Tiles</li>
                    <li class="opened"><svg class="ic16"><use href="#tiles"/></svg>XYZ Tiles</li>
                    <li class="child"><svg class="ic16"><use href="#tiles"/></svg>Naver Street</li>
                    <li class="child"><svg class="ic16"><use href="#tiles"/></svg>OpenStreetMap</li>
                    <li><svg class="ic16"><use href="#wcs"/></svg>WCS</li>
                    <li><svg class="ic16"><use href="#wfs"/></svg>WFS / OGC API - Features</li>
                    <li><svg class="ic16"><use href="#ows"/></svg>OWS</li>
                    <li><svg class="ic16"><use href="#arc-map"/></svg>ArcGIS 맵 서비스</li>
                    <li><svg class="ic16"><use href="#arc-feat"/></svg>ArcGIS 피처 서비스</li>
                    <li><svg class="ic16"><use href="#geonode"/></svg>GeoNode</li>
                </ul>
            </section>
            <div class="handle"></div>
            <!-- layers -->
            <section class="dock layers">
                <div class="dock-title">
                    <h2>레이어</h2>
                    <button aria-label="분리"><svg><use href="#float"/></svg></button>
                    <button aria-label="닫기"><svg><use href="#close"/></svg></button>
                </div>
                <div class="dock-tools">
                    <button aria-label="스타일"><svg><use href="#brush"/></svg></button>
                    <button aria-label="그룹 추가"><svg><use href="#group"/></svg></button>
                    <button aria-label="지도 테마"><svg><use href="#eye"/></svg></button>
                    <button aria-label="범례 필터"><svg><use href="#funnel"/></svg></button>
                    <button class="drop" aria-label="표현식 필터"><svg><use href="#epsilon"/></svg></button>
                    <button aria-label="모두 펼치기"><svg><use href="#expand"/></svg></button>
                    <button aria-label="모두 접기"><svg><use href="#collapse"/></svg></button>
                    <button aria-label="레이어 제거"><svg><use href="#del-box"/></svg></button>
                </div>
                <div class="layer-box">
                    <ul class="layer-list">
                        <li class="current"><label><input type="checkbox" checked><i class="dot teal"></i><span>U_SB_220531_SolsamStation_POI</span></label></li>
                        <li><label><input type="checkbox" checked><i class="line pink"></i><span>U_SB_220531_SolsamStation</span></label></li>
                        <li><label><input type="checkbox" checked><i class="line lime"></i><span>U_SB_220531_SolsamStation_moved</span></label></li>
                        <li><label><input type="checkbox" checked><i class="line violet"></i><span>U_SB_220531_SolsamStation_entities</span></label><svg class="ic16"><use href="#unknown"/></svg></li>
                        <li class="opened"><label><input type="checkbox" checked><svg class="ic16"><use href="#raster"/></svg><span>OpenStreetMap</span></label></li>
                        <li><label><input type="checkbox" checked><i class="dot maroon"></i><span>Point</span></label></li>
                        <li><label><input type="checkbox" checked><i class="fill"></i><span>seoul_footprint_append_20200306</span></label></li>
                        <li class="hidden"><label><input type="checkbox"><i class="line ochre"></i><span>U_SB_220531_SolsamStation_F01</span></label></li>
                        <li class="hidden"><label><input type="checkbox"><i class="line green"></i><span>U_SB_220531_SolsamStation_F01 entities</span></label><svg class="ic16"><use href="#unknown"/></svg></li>
                        <li class="hidden"><label><input type="checkbox"><i class="line brown"></i><span>U_SB_220531_SolsamStation_B01</span></label></li>
                        <li class="hidden"><label><input type="checkbox"><i class="line khaki"></i><span>U_SB_220531_SolsamStation_B01 entities</span></label><svg class="ic16"><use href="#unknown"/></svg></li>
                        <li class="hidden"><label><input type="checkbox"><i class="line rose"></i><span>U_SB_220531_SolsamStation_B02</span></label></li>
                    </ul>
                    <div class="scrollbar">
                        <button class="up" aria-label="위로"></button>
                        <div class="track"><div class="thumb"></div></div>
                        <button class="down" aria-label="아래로"></button>
                    </div>
                </div>
            </section>
        </aside>
        <div class="splitter"></div>

        <!-- station floor plan, 3 units to a pixel -->
        <div class="canvas">
            <svg class="plan" viewBox="30 18 1536 648">
                <defs>
                    <pattern id="treads" y="13" width="9" height="27" patternUnits="userSpaceOnUse"><rect width="9" height="27" fill="#9f80bd"/><rect x="3" y="7" width="5" height="14" fill="#abb4d5"/></pattern>
                </defs>
                <g class="wall">
                    <path d="M43 31H1552V649H43z"/>
                    <path d="M43 275H61M422 139H61V286M205 160H82V262H143M190 217V268H222M205 139V250L268 319H409M214 186V248L272 311H409M211 145H299V179H211zM303 139V186M297 186V216L305 225H407M307 160H374M374 214V155H400L407 162V214M422 193V115H551V193M475 130H540V193M422 167H499V193M422 179H487V193"/>
                    <path d="M407 193H1085V65L1552 33M434 310V226L442 217H872V290M446 253H466M516 253H589M466 247H516V259H466zM80 366V312L88 305H258M409 319V448M355 382H409V448H355z"/>
                    <path d="M120 391H59V631H404M118 450V577M59 512H118M84 508l12 8v-8l-12 8zM120 393H155V447H120zM148 562V461H424V558M148 468H415L422 475M148 562H267V577M267 631V649M133 577H183V631H133zM133 604H183M120 419H155M378 577H404V631H378zM378 604H404"/>
                    <path d="M404 560H650V649H404zM434 316V365H445V388H434V530L440 537H1411L1417 530V388H1406V365H1417V320H1366M650 562H1457V193H1177V146L1547 115V33M650 575H680V577H742V648M650 592H684V630H650M650 358V290H872M650 358H1120V364M841 298H879V352H841zM841 325H879M881 350V220H1160M881 350H1130V363H1160"/>
                    <path d="M1102 220V79L1175 75M1160 367V131L1547 102M1171 223V367M1171 223H1225V241H1279V223H1411V317M1125 216l12 9v-9l-12 9zM1142 367H1217M1142 373H1217M1457 262H1477V493H1457M1320 89L1460 75M1317 98L1460 84M1317 122L1465 110M1317 65L1460 49M1467 47H1486V109L1467 112M1176 73L1235 69V126L1176 130zM1176 100H1235M1241 517V537M1231 480H1411V537"/>
                    <path d="M545 365h24v24h-24zM689 365h24v24h-24zM833 365h24v24h-24zM929 365h24v24h-24zM1025 365h24v24h-24zM1121 365h24v24h-24zM1217 365h24v24h-24zM1313 365h24v24h-24z"/>
                </g>
                <g class="wall thick">
                    <path d="M61 286H235M143 217H187V262H143zM214 183H303V214M255 184V235L290 268H409M407 225V310M307 160V214M307 186H374M331 186V214M331 216H407M434 127H475V168H434zM448 275H589V232H446V314H434M80 345H205V306M43 368H409"/>
                    <path d="M689 589H731V633H689zM689 537V480H866V537M872 217V290M1171 317H1411M1228 388V537M1366 317V480M1307 480V441H1364M1339 441V480M1231 480H1300M1231 517H1275V537M1320 534H1411M1460 44H1467V122H1460zM1180 73V130M1213 71V128M118 393V450M130 575V633M404 575V633M872 298V352"/>
                </g>
                <path fill="url(#treads)" d="M155 391H357V448H155zM183 577H378V631H183z"/>
                <path fill="url(#treads)" transform="translate(0 15)" d="M656 283H841V337H656zM1235 54L1317 50V107L1235 111z"/>
                <path class="rail" d="M155 419H357M183 604H378M656 325H841M1235 98L1317 93M155 391H357M155 448H357M183 577H378M183 631H378M656 298H841M656 352H841M1235 71L1320 65M1235 127L1320 121"/>
                <g class="knob"><circle cx="116" cy="588" r="4"/><circle cx="116" cy="625" r="4"/><circle cx="889" cy="304" r="4"/><circle cx="889" cy="342" r="4"/><circle cx="1163" cy="85" r="4"/><circle cx="1166" cy="122" r="4"/></g>
                <g class="poi">
                    <circle cx="204" cy="231" r="11"/><circle cx="255" cy="243" r="11"/><circle cx="279" cy="204" r="11"/><circle cx="318" cy="186" r="11"/><circle cx="318" cy="228" r="11"/><circle cx="378" cy="243" r="11"/><circle cx="414" cy="228" r="11"/>
                    <circle cx="453" cy="327" r="11"/><circle cx="453" cy="341" r="11"/><circle cx="540" cy="543" r="11"/><circle cx="612" cy="228" r="11"/><circle cx="630" cy="228" r="11"/><circle cx="744" cy="228" r="11"/><circle cx="759" cy="228" r="11"/>
                    <circle cx="690" cy="252" r="11"/><circle cx="690" cy="267" r="11"/><circle cx="690" cy="294" r="11"/><circle cx="684" cy="459" r="11"/><circle cx="666" cy="483" r="11"/><circle cx="690" cy="489" r="11"/>
                    <circle cx="834" cy="228" r="11"/><circle cx="1020" cy="225" r="11"/><circle cx="1008" cy="225" r="11"/><circle cx="1158" cy="174" r="11"/><circle cx="1164" cy="276" r="11"/><circle cx="1164" cy="339" r="11"/><circle cx="1002" cy="357" r="11"/><circle cx="1485" cy="78" r="11"/>
                    <circle cx="1233" cy="225" r="11"/><circle cx="1221" cy="225" r="11"/><circle cx="1245" cy="261" r="11"/><circle cx="1266" cy="276" r="11"/><circle cx="1290" cy="261" r="11"/><circle cx="1293" cy="255" r="11"/>
                    <circle cx="801" cy="534" r="11"/><circle cx="828" cy="528" r="11"/><circle cx="813" cy="531" r="11"/><circle cx="912" cy="534" r="11"/><circle cx="1026" cy="531" r="11"/><circle cx="1125" cy="534" r="11"/>
                    <circle cx="1269" cy="484" r="11"/><circle cx="1260" cy="489" r="11"/><circle cx="1245" cy="501" r="11"/><circle cx="1290" cy="504" r="11"/><circle cx="1278" cy="504" r="11"/><circle cx="1305" cy="531" r="11"/><circle cx="1314" cy="534" r="11"/>
                </g>
            </svg>
        </div>
    </main>

    <footer class="statusbar">
        <div class="locator">
            <svg><use href="#glass"/></svg>
            <input type="text" aria-label="위치 찾기" placeholder="위치를 찾으려면 입력하세요 (Ctrl+K)">
        </div>
        <label for="coord">좌표</label>
        <input id="coord" class="field coord" type="text" value="-90,2,67,6">
        <svg class="ic16 extent"><use href="#mouse"/></svg>
        <label for="scale">축척</label>
        <div class="field combo"><select id="scale"><option>1:592</option></select></div>
        <svg class="ic16 padlock"><use href="#lock"/></svg>
        <label for="magnifier">확대경</label>
        <div class="field spin"><input id="magnifier" type="text" value="100%"></div>
        <label for="rotation">회전</label>
        <div class="field spin"><input id="rotation" type="text" value="0,0 °"></div>
        <label class="render"><input type="checkbox" checked>렌더링</label>
        <button class="crs"><svg class="ic16"><use href="#crs"/></svg>EPSG:5186</button>
        <button class="messages" aria-label="메시지"><svg class="ic16"><use href="#message"/></svg></button>
    </footer>

    <div class="taskbar">
        <button aria-label="시작"><svg viewBox="0 0 24 24"><path d="M4 6l7-1v6.500H4zM12 5l8-1v7.500h-8zM4 12.500h7V19l-7-1zM12 12.500h8V20l-8-1z" fill="#fff"/></svg></button>
        <button aria-label="검색"><svg viewBox="0 0 24 24"><circle cx="14" cy="10" r="5.500" fill="none" stroke="#fff" stroke-width="1.400"/><path d="M10 14l-6 6" stroke="#fff" stroke-width="1.400"/></svg></button>
        <button aria-label="작업 보기"><svg viewBox="0 0 24 24"><path d="M4.500 4v3h11V4M4.500 20v-3h11v3M4.500 9.500h11v5h-11zM19 4v3M19 10v10" fill="none" stroke="#fff" stroke-width="1.300"/></svg></button>
        <div class="apps">
            <button class="open" aria-label="파일 탐색기"><svg viewBox="0 0 24 24"><path d="M1 3h8l2 2h12v5H1z" fill="#dda12b"/><path d="M1 6h22v15H1z" fill="#ffd35c"/><path d="M5 22v-9h14v9h-4v-4H9v4z" fill="#3f93d1"/></svg></button>
            <button class="open" aria-label="Chrome"><svg viewBox="0 0 24 24"><circle cx="12" cy="12" r="11" fill="#33a852"/><path d="M2.500 6.500A11 11 0 0 1 21.500 6.500H12L7 15z" fill="#e33b2e"/><path d="M21.500 6.500A11 11 0 0 1 11 23l5-9 0-7.500z" fill="#fcc934"/><circle cx="12" cy="12" r="5.500" fill="#fff"/><circle cx="12" cy="12" r="4.300" fill="#3879e8"/></svg></button>
            <button class="open" aria-label="Edge"><svg viewBox="0 0 24 24"><circle cx="12" cy="12" r="11" fill="#1279c8"/><path d="M1 11C2 4 7 1 12 1c7 0 11 5 11 9 0 4-3 6-6 6s-4-1-3-3c1-4-7-8-13-2z" fill="#3cc6a0"/><path d="M14 13c0 3 3 5 8 3-2 2-5 3-8 2-3-1-3-4 0-5z" fill="#21353d"/><path d="M9 11c-3 5 0 11 6 12-7 1-13-3-14-10 2-3 5-4 8-2z" fill="#135da8"/></svg></button>
            <button aria-label="SketchUp"><svg viewBox="0 0 24 24"><path d="M0 0h24v24H0z" fill="#e9eff6"/><path d="M12 3l7 3v9c0 3-3 5-7 7v-3l4-3v-3l-4-2-7 3v-3l7-3 4 2V8l-4-2-7 3V6zM5 16l7 3M5 13l7 3" fill="none" stroke="#136ba6" stroke-width="1.600"/></svg></button>
            <button class="open current" aria-label="QGIS"><svg><use href="#qgis"/></svg></button>
            <button aria-label="AutoCAD"><svg viewBox="0 0 24 24"><path d="M0 0h24v24H0z" fill="#f6e9e6"/><path d="M5 21L10 3h5l5 18h-4l-1-5-6 1-1 4z" fill="#b8202a"/><path d="M10 13l2-7 2 6z" fill="#f6e9e6"/></svg></button>
            <button aria-label="Blender"><svg viewBox="0 0 24 24"><path d="M1 17l10-8H4V7h9l-2-3 2-1 8 7c4 5 0 11-6 11-4 0-7-2-7-6l-5 4z" fill="#e87d0d"/><circle cx="15" cy="14" r="4.500" fill="#fff"/><circle cx="15" cy="14" r="2.700" fill="#265787"/></svg></button>
            <button aria-label="Photoshop"><svg viewBox="0 0 24 24"><path d="M2 1.500h20v20H2z" fill="#06063f" stroke="#7fa9e8" stroke-width="1.300"/><text x="5" y="16" class="glyph sans bold ps" font-size="12">Ps</text></svg></button>
            <button aria-label="계산기"><svg viewBox="0 0 24 24"><path d="M0 0h24v24H0z" fill="#49484b"/><path d="M5 2h14v20H5z" fill="#f2f2f2"/><path d="M7 4h10v4H7z" fill="#49484b"/><path d="M7 11h10M7 14.500h10M7 18h10" stroke="#49484b" stroke-width="2" stroke-dasharray="2 2"/></svg></button>
            <button aria-label="캡처 도구"><svg viewBox="0 0 24 24"><ellipse cx="12" cy="8" rx="11" ry="7" transform="rotate(-15 12 8)" fill="#f2efee" stroke="#c4383c"/><path d="M6 9l11-4M12 4l1 6" stroke="#aaa"/><path d="M14 9l3 8M18 10l-4 8" stroke="#ddd" stroke-width="2"/><g fill="none" stroke="#2a87c7" stroke-width="2"><circle cx="15" cy="20" r="2.300"/><circle cx="20" cy="18" r="2.300"/></g></svg></button>
        </div>
        <div class="tray">
            <button class="weather"><svg viewBox="0 0 24 24"><path d="M1 4h19v16H1zM20 7h3v13h-3M4 8h13M4 12h6v5H4zM12 12h5M12 15h5M12 17.500h5" fill="none" stroke="#fff" stroke-width="1.800"/></svg>22°C&nbsp; 비 약간</button>
            <button aria-label="숨겨진 아이콘"><svg viewBox="0 0 16 16"><path d="M2 11l6-6 6 6"/></svg></button>
            <button aria-label="카메라"><svg viewBox="0 0 16 16"><rect x="3.500" y="4.500" width="7" height="8" rx="1.500"/><path d="M10.500 8l3-2v5l-3-2M4 2.500c2-1.500 4-1.500 6 0M4 14.500c2 1.500 4 1.500 6 0"/><circle cx="7" cy="8.500" r="1.500"/></svg></button>
            <button aria-label="네트워크"><svg viewBox="0 0 16 16"><path d="M4.500 2.500h11v8h-11zM10 10.500v3M7 13.500h6M1 2.500h3v4H1zM2.500 6.500v7H5"/></svg></button>
            <button aria-label="볼륨"><svg viewBox="0 0 16 16"><path d="M1 6h2l3-3v10l-3-3H1zM8 6c1 1 1 3 0 4M10 4.500c2 2 2 5 0 7M12 3c3 3 3 7 0 10"/></svg></button>
            <button class="ime">A</button>
            <button class="datetime"><time>오후 4:17</time><time>2022-05-30</time></button>
            <button class="notes" aria-label="알림"><svg viewBox="0 0 18 18"><path d="M1.500 1.500h15v12h-4.500l-3 3-3-3h-4.500z"/></svg></button>
        </div>
    </div>
</body>
</html>
```
FILE: styles.css
```css
/* base */
*{
    box-sizing: border-box;
}
body{
    margin: 0;
    height: 100vh;
    display: flex;
    flex-direction: column;
    overflow: hidden;
    background: #efefef;
    color: #000;
    font: 12px/18px "Noto Sans CJK KR", sans-serif;
}
button, input, select{
    margin: 0;
    padding: 0;
    border: 0;
    background: none;
    color: inherit;
    font: inherit;
}
h1, h2{
    margin: 0;
    font-size: 12px;
    font-weight: normal;
}
ul{
    margin: 0;
    padding: 0;
    list-style: none;
}
.sprite{
    display: none;
}
.paint{
    position: absolute;
    width: 0;
    height: 0;
}
.ic16{
    width: 16px;
    height: 16px;
    flex: none;
}
.glyph{
    fill: #444;
    font-style: normal;
    font-weight: normal;
}
.sans{
    font-family: "Liberation Sans", sans-serif;
}
.serif{
    font-family: "Liberation Serif", serif;
}
.slant{
    font-style: italic;
    font-weight: bold;
}
.bold{
    font-weight: bold;
}
.white{
    fill: #fff;
}
.red{
    fill: #d9303a;
}
.ps{
    fill: #8fc0ff;
}

/* title and menu */
.titlebar{
    display: flex;
    align-items: center;
    flex: none;
    height: 23px;
    padding-left: 2px;
    background: #fff;
}
.titlebar h1{
    flex: 1;
    padding-left: 5px;
    font-family: "Open Sans", "Noto Sans CJK KR", sans-serif;
}
.window-buttons{
    display: flex;
}
.window-buttons button{
    width: 46px;
    height: 23px;
}
.window-buttons svg{
    display: block;
    width: 12px;
    height: 12px;
    margin: 0 auto 2px;
    fill: none;
    stroke: #000;
}
.menubar{
    display: flex;
    gap: 1px;
    flex: none;
    height: 20px;
    padding-left: 2px;
    border-bottom: 1px solid #d4d4d4;
}
.menubar button{
    padding: 0 8px;
    white-space: nowrap;
}

/* toolbars */
.toolbar-row{
    display: flex;
    flex: none;
    height: 39px;
    border-bottom: 1px solid #b4b4b4;
    background: linear-gradient(#fafafa, #ededed);
}
.toolbar-row.last{
    height: 38px;
}
.toolbar{
    display: flex;
    align-items: center;
    gap: 1px;
    margin-right: 4px;
}
.toolbar::before{
    content: "";
    width: 5px;
    height: 20px;
    margin: 0 3px 0 4px;
    background: radial-gradient(circle, #b5b5b5 40%, transparent 50%) 0 0 / 3px 3px;
}
.toolbar button{
    display: flex;
    align-items: center;
    justify-content: center;
    width: 32px;
    height: 32px;
    border: 1px solid transparent;
    border-radius: 2px;
}
.toolbar button svg{
    width: 24px;
    height: 24px;
    flex: none;
}
.toolbar button.active{
    border-color: #aaa;
    background: #dadada;
}
.toolbar button:disabled svg{
    filter: grayscale(1);
    opacity: .35;
}
.toolbar button.drop{
    width: 44px;
    justify-content: flex-start;
    padding-left: 3px;
}
.drop::after{
    content: "";
    margin-left: 6px;
    border: 4px solid transparent;
    border-top: 5px solid #555;
    border-bottom: 0;
}
.drop:disabled::after{
    border-top-color: #999;
}
.sep{
    width: 1px;
    height: 24px;
    margin: 0 3px;
    background: #cfcfcf;
}
.sep:last-child{
    margin-right: 1px;
}

/* docks */
.workspace{
    display: flex;
    flex: 1;
    min-height: 0;
}
.docks{
    display: flex;
    flex-direction: column;
    flex: 0 0 327px;
    min-width: 0;
}
.dock{
    display: flex;
    flex-direction: column;
    min-height: 0;
}
.browser{
    flex: 1;
}
.layers{
    flex: 0 0 262px;
}
.dock-title{
    display: flex;
    align-items: center;
    gap: 2px;
    flex: none;
    height: 20px;
    padding: 0 2px 0 5px;
}
.dock-title h2{
    flex: 1;
}
.dock-title button, .dock-title svg{
    display: block;
    width: 12px;
    height: 12px;
}
.dock-tools{
    display: flex;
    align-items: center;
    gap: 9px;
    flex: none;
    height: 31px;
    padding: 0 0 2px 8px;
}
.dock-tools button{
    display: flex;
    align-items: center;
}
.dock-tools svg{
    width: 16px;
    height: 16px;
}
.dock-tools .drop::after{
    margin-left: 6px;
}
.tree, .layer-box{
    flex: 1;
    min-height: 0;
    overflow: hidden;
    border: 1px solid #b0b0b0;
    background: #fff;
}
.tree li{
    display: flex;
    align-items: center;
    gap: 6px;
    position: relative;
    height: 18px;
    padding-left: 23px;
}
.tree li.child{
    padding-left: 43px;
}
.closed::before, .opened::before{
    content: "";
    position: absolute;
    border: 4px solid transparent;
}
.closed::before{
    left: 8px;
    border-left-color: #555;
    border-right: 0;
}
.opened::before{
    left: 6px;
    border-top-color: #555;
    border-bottom: 0;
}
.handle{
    flex: none;
    height: 5px;
}
.handle::after{
    content: "";
    display: block;
    width: 16px;
    height: 3px;
    margin: 1px auto;
    background: radial-gradient(circle, #bbb 40%, transparent 50%) 0 0 / 3px 3px;
}
.splitter{
    display: flex;
    align-items: center;
    flex: none;
    width: 6px;
}
.splitter::after{
    content: "";
    width: 3px;
    height: 18px;
    margin-left: 2px;
    background: radial-gradient(circle, #bbb 40%, transparent 50%) 0 0 / 3px 3px;
}

/* layers */
.layer-box{
    display: flex;
}
.layer-list{
    flex: 1;
    min-width: 0;
}
.layer-list li{
    display: flex;
    align-items: center;
    position: relative;
    height: 18px;
    padding: 0 5px 0 23px;
    font-family: "Open Sans", "Noto Sans CJK KR", sans-serif;
    font-weight: 600;
}
.layer-list label{
    display: flex;
    align-items: center;
    flex: 1;
    min-width: 0;
}
.layer-list label span{
    overflow: hidden;
    white-space: nowrap;
}
.layer-list .current{
    background: #efefef;
}
.layer-list .current span{
    text-decoration: underline;
}
.layer-list .hidden{
    color: #777;
    font-style: italic;
}
input[type="checkbox"]{
    appearance: none;
    flex: none;
    display: flex;
    justify-content: center;
    width: 14px;
    height: 14px;
    border: 1px solid #b4b4b4;
    background: #fff;
}
input[type="checkbox"]:checked::after{
    content: "";
    width: 5px;
    height: 9px;
    border: solid #000;
    border-width: 0 2px 2px 0;
    transform: rotate(35deg);
}
.layer-list label svg, .fill{
    width: 16px;
    height: 16px;
    flex: none;
    margin: 0 6px;
}
.line{
    flex: none;
    width: 14px;
    height: 2px;
    margin: 0 6px;
}
.dot{
    flex: none;
    width: 7px;
    height: 7px;
    margin: 0 11px 0 10px;
    border-radius: 50%;
}
.fill{
    background: #ff9e17;
    border: 1px solid #a8690f;
}
.teal{ background: #4c8583; }
.maroon{ background: #964450; }
.pink{ background: #e68aa6; }
.lime{ background: #c6d67c; }
.violet{ background: #ad97c4; }
.ochre{ background: #d2c469; }
.green{ background: #8bab8d; }
.brown{ background: #a3746c; }
.khaki{ background: #c4c1a5; }
.rose{ background: #da7ba0; }
.scrollbar{
    display: flex;
    flex-direction: column;
    width: 14px;
    border-left: 1px solid #b9b9b9;
}
.scrollbar button{
    display: flex;
    align-items: center;
    justify-content: center;
    flex: none;
    height: 14px;
}
.scrollbar button::after{
    content: "";
    border: 4px solid transparent;
}
.scrollbar .up::after{
    border-bottom: 5px solid #555;
    border-top: 0;
}
.scrollbar .down::after{
    border-top: 5px solid #555;
    border-bottom: 0;
}
.track{
    flex: 1;
    border: solid #b9b9b9;
    border-width: 1px 0;
    background: #dedede;
}
.thumb{
    height: 68%;
    border-bottom: 1px solid #b9b9b9;
    background: linear-gradient(90deg, #fff, #f1f1f1);
}

/* map */
.canvas{
    position: relative;
    flex: 1;
    overflow: hidden;
    border: solid #b4b4b4;
    border-width: 1px 0;
    background: #aad3df;
}
.plan{
    position: absolute;
    left: 377px;
    top: 346px;
    width: 512px;
    height: 216px;
}
.wall{
    fill: none;
    stroke: #9580ba;
    stroke-width: 3;
    opacity: .9;
}
.thick{
    stroke: #a07cbc;
    stroke-width: 5;
}
.rail{
    fill: none;
    stroke: #9c74ba;
    stroke-width: 4;
}
.knob{
    fill: #9580ba;
}
.poi{
    fill: #729b6f;
    stroke: #232f23;
    stroke-width: 3;
}

/* status bar */
.statusbar{
    display: flex;
    align-items: center;
    flex: none;
    height: 28px;
    padding: 0 7px 0 4px;
}
.locator{
    display: flex;
    align-items: center;
    width: 356px;
    height: 22px;
    margin-right: auto;
    padding-left: 8px;
    border: 1px solid #aaa;
    border-radius: 3px;
    background: #fff;
}
.locator svg{
    width: 13px;
    height: 13px;
}
.locator input{
    flex: 1;
    padding-left: 8px;
}
.locator input::placeholder{
    color: #777;
}
.field{
    display: flex;
    height: 22px;
    margin: 0 10px 0 4px;
    border: 1px solid #aaa;
    border-radius: 3px;
    background: #fff;
}
.field input, .field select{
    flex: 1;
    min-width: 0;
    padding-left: 4px;
    appearance: none;
}
.coord{
    width: 66px;
    margin-right: 4px;
    padding-left: 5px;
}
.extent{
    margin-right: 10px;
}
.combo{
    position: relative;
    width: 82px;
}
.combo select{
    margin-right: 19px;
    border-right: 1px solid #bbb;
}
.combo::after{
    content: "";
    position: absolute;
    top: 8px;
    right: 5px;
    border: 4px solid transparent;
    border-top: 5px solid #555;
    border-bottom: 0;
}
.padlock{
    margin-right: 7px;
}
.spin{
    position: relative;
    width: 86px;
}
.spin::before, .spin::after{
    content: "";
    position: absolute;
    right: 3px;
    border: 4px solid transparent;
}
.spin::before{
    top: 4px;
    border-bottom: 5px solid #555;
    border-top: 0;
}
.spin::after{
    bottom: 4px;
    border-top: 5px solid #555;
    border-bottom: 0;
}
.spin input{
    margin-right: 14px;
    border-right: 1px solid #bbb;
}
.render{
    display: flex;
    align-items: center;
    gap: 6px;
}
.crs{
    display: flex;
    align-items: center;
    gap: 4px;
    margin: 0 20px 0 16px;
}
.messages svg{
    display: block;
}

/* taskbar */
.taskbar{
    display: flex;
    flex: none;
    height: 40px;
    padding-right: 4px;
    background: linear-gradient(90deg, #21363e 0%, #22353f 55%, #1c2742 90%);
    color: #fff;
    font-size: 15px;
}
.taskbar button{
    display: flex;
    align-items: center;
    justify-content: center;
    width: 48px;
    height: 40px;
}
.taskbar svg{
    width: 24px;
    height: 24px;
    flex: none;
}
.apps{
    display: flex;
    gap: 1px;
    margin-left: 3px;
}
.apps .open{
    background: linear-gradient(#76b9ed, #76b9ed) center bottom / 40px 2px no-repeat;
}
.apps .current{
    background-color: #4c5f68;
    background-size: 48px 2px;
}
.tray{
    display: flex;
    margin-left: auto;
}
.taskbar .tray button{
    width: 24px;
}
.taskbar .tray svg{
    width: 16px;
    height: 16px;
    fill: none;
    stroke: #fff;
}
.taskbar .tray .weather{
    width: auto;
    gap: 7px;
    margin-right: 10px;
}
.taskbar .tray .weather svg{
    width: 24px;
    height: 24px;
}
.tray .ime{
    font-size: 18px;
}
.taskbar .tray .datetime{
    flex-direction: column;
    width: 80px;
    font-size: 13px;
    line-height: 18px;
}
.taskbar .tray .notes{
    width: 40px;
    margin-right: 8px;
}
.taskbar .tray .notes svg{
    width: 18px;
    height: 18px;
}
```
